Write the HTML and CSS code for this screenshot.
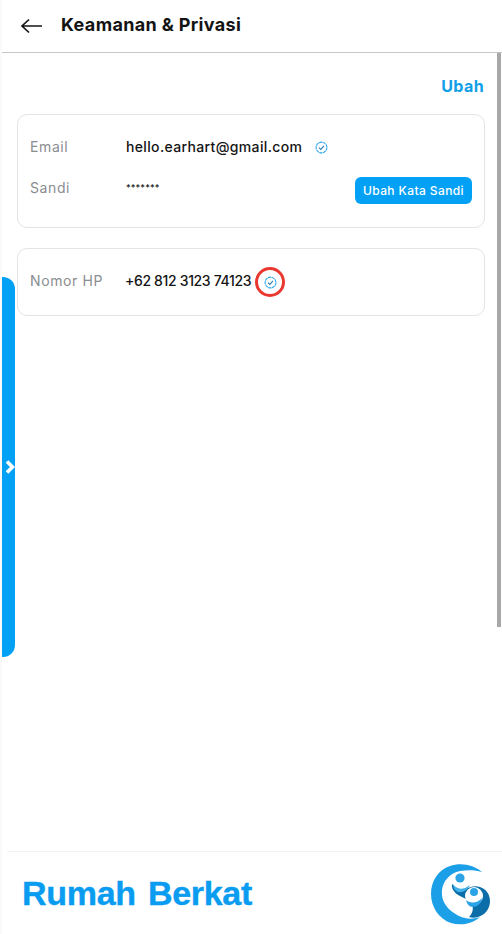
FILE: index.html
```html
<!DOCTYPE html>
<html lang="en">
<head>
    <meta charset="UTF-8">
    <meta name="viewport" content="width=device-width, initial-scale=1.0">
    <title>Keamanan &amp; Privasi</title>
    <link rel="stylesheet" href="styles.css">
</head>
<body>

    <div class="page">
        <header class="topbar">
            <svg class="back-icon" width="24" height="16" viewBox="0 0 24 16">
                <path d="M22 8H2M9 1.5 2 8l7 6.5" fill="none" stroke="#161616" stroke-width="1.7"/>
            </svg>
            <h1>Keamanan &amp; Privasi</h1>
        </header>

        <main class="content">
            <div class="edit-row"><a class="edit-link">Ubah</a></div>

            <section class="card card-login">
                <div class="row row-email">
                    <span class="label">Email</span>
                    <span class="value">hello.earhart@gmail.com</span>
                    <svg class="check-icon check-email" width="13" height="13" viewBox="0 0 13 13">
                        <circle cx="6.5" cy="6.5" r="5.4" fill="none" stroke="#2ba6ec" stroke-width="1.1" stroke-dasharray="3.2 .5"/>
                        <path d="M4 6.7 5.8 8.4 9 4.9" fill="none" stroke="#2a7fb8" stroke-width="1.1"/>
                    </svg>
                </div>
                <div class="row row-pass">
                    <span class="label">Sandi</span>
                    <span class="value dots">*******</span>
                    <button class="btn-pass">Ubah Kata Sandi</button>
                </div>
            </section>

            <section class="card card-phone">
                <div class="row">
                    <span class="label">Nomor HP</span>
                    <span class="value phone">+62 812 3123 74123</span>
                    <span class="ring">
                        <svg class="check-icon" width="13" height="13" viewBox="0 0 13 13">
                            <circle cx="6.5" cy="6.5" r="5.4" fill="none" stroke="#2ba6ec" stroke-width="1.1" stroke-dasharray="3.2 .5"/>
                            <path d="M4 6.7 5.8 8.4 9 4.9" fill="none" stroke="#2a7fb8" stroke-width="1.1"/>
                        </svg>
                    </span>
                </div>
            </section>
        </main>

        <footer class="footer">
            <div class="brand">Rumah Berkat</div>
            <svg class="logo" width="62" height="62" viewBox="0 0 62 62">
                <path d="M52 9C44 2 31-1 20 3 8 7 1 18 1 31c0 13 8 25 20 29 10 3 21 1 29-6-9 3-18 2-26-4-9-6-13-14-12-23C13 18 20 10 30 8c8-1 15-1 22 1Z" fill="#1b9fe6"/>
                <path d="M22 21c3 4 8 6 13 5 5-2 10-4 15-2 6 2 10 7 10 14 0 8-5 14-12 16-3 1-6 1-9 0 3-3 5-8 3-12-2-4-6-6-10-8-7-3-11-8-10-13Z" fill="#0c6ea9"/>
                <path d="M23 21c3 5 9 6 14 3l3-2c-3 6-9 9-14 6-2-2-3-4-3-7Z" fill="#3fb0ea"/>
                <circle cx="30" cy="15" r="4.6" fill="#2ba3e6"/>
                <circle cx="44" cy="33" r="9" fill="#fff"/>
                <circle cx="44" cy="29" r="4" fill="#2ba3e6"/>
                <path d="M36 37c3 3 11 4 16-2-1 6-5 9-9 9-4 0-6-3-7-7Z" fill="#2ba3e6"/>
            </svg>
        </footer>

        <div class="side-tab">
            <svg width="10" height="14" viewBox="0 0 10 14">
                <path d="M2 1.5 7.5 7 2 12.5" fill="none" stroke="#fff" stroke-width="3.6"/>
            </svg>
        </div>
        <div class="scroll-thumb"></div>
    </div>

</body>
</html>
```

FILE: styles.css
```css
* {
    box-sizing: border-box;
}

body {
    margin: 0;
    background-color: #fff;
    font-family: Inter, "Open Sans", sans-serif;
    color: #141414;
}

.page {
    position: relative;
    display: flex;
    flex-direction: column;
    width: 502px;
    height: 934px;
    overflow: hidden;
    border-left: 2px solid #fafafa;
}

.topbar {
    display: flex;
    align-items: center;
    height: 53px;
    padding-left: 18px;
    padding-bottom: 3px;
    border-bottom: 1px solid #c6c6c6;
}

.back-icon {
    margin-right: 17px;
    margin-top: 2px;
}

h1 {
    margin: 0;
    font-size: 18px;
    font-weight: 700;
    letter-spacing: 0.35px;
}

.content {
    flex: 1;
    padding: 0 17px 0 15px;
}

.edit-row {
    display: flex;
    justify-content: flex-end;
    height: 61px;
    padding-top: 23px;
    padding-right: 1px;
}

.edit-link {
    color: #10a0e8;
    font-size: 16px;
    line-height: 20px;
    font-weight: 700;
    letter-spacing: 0.4px;
}

.card {
    border: 1px solid #e4e4e4;
    border-radius: 10px;
    padding: 0 12px;
}

.card-login {
    height: 114px;
    padding-top: 20px;
    margin-bottom: 20px;
}

.card-phone {
    display: flex;
    align-items: center;
    height: 68px;
    padding-bottom: 3px;
}

.row {
    display: flex;
    align-items: center;
    width: 100%;
}

.row-email {
    height: 22px;
}

.row-pass {
    height: 22px;
    margin-top: 19px;
}

.label {
    flex: 0 0 96px;
    color: #8a8d90;
    font-size: 14px;
    letter-spacing: 0.6px;
}

.value {
    font-size: 14px;
    font-weight: 450;
    letter-spacing: 0.35px;
}

.dots {
    font-size: 9px;
    letter-spacing: 0.1px;
}

.phone {
    margin-left: -1px;
    letter-spacing: -0.35px;
}

.check-email {
    margin-left: 13px;
    margin-top: 2px;
}

.btn-pass {
    margin-left: auto;
    margin-top: 6px;
    width: 117px;
    height: 27px;
    padding: 0;
    border: none;
    border-radius: 6px;
    background-color: #03a1f5;
    color: #fff;
    font-family: Inter, "Open Sans", sans-serif;
    font-size: 12px;
    font-weight: 500;
    letter-spacing: 0.4px;
}

.ring {
    display: flex;
    align-items: center;
    justify-content: center;
    width: 30px;
    height: 30px;
    margin-left: 4px;
    margin-top: 3px;
    border: 3.5px solid #e8382f;
    border-radius: 50%;
}

.footer {
    display: flex;
    align-items: center;
    justify-content: space-between;
    height: 83px;
    margin-left: 5px;
    padding: 0 10px 0 15px;
    border-top: 1px solid #f3f3f3;
}

.brand {
    color: #0a9cf0;
    font-family: "Liberation Sans", sans-serif;
    font-size: 34px;
    font-weight: 700;
    letter-spacing: -0.3px;
    word-spacing: 3px;
    -webkit-text-stroke: 0.4px #0a9cf0;
}

.logo {
    margin-top: 1px;
}

.side-tab {
    position: absolute;
    left: -2px;
    top: 277px;
    display: flex;
    align-items: center;
    justify-content: center;
    width: 15px;
    height: 380px;
    padding-left: 5px;
    background-color: #03a1f5;
    border-radius: 0 12px 12px 0;
}

.scroll-thumb {
    position: absolute;
    left: 495px;
    top: 53px;
    width: 4px;
    height: 574px;
    background-color: #a8a8a8;
}
```
